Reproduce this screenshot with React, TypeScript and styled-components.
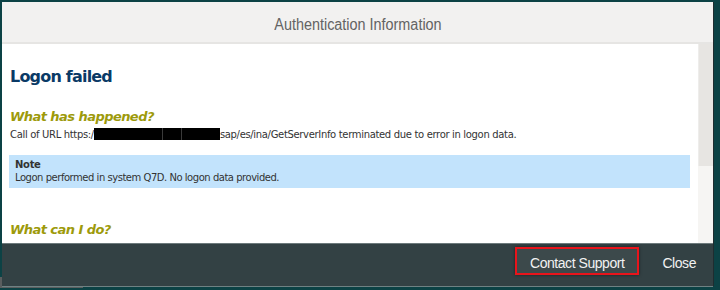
import React from "react";
import styled, { createGlobalStyle } from "styled-components";

const Global = createGlobalStyle`
  html, body { margin: 0; padding: 0; }
  body {
    background: #0c4245;
    width: 720px;
    height: 290px;
    overflow: hidden;
    font-family: "DejaVu Sans", Verdana, sans-serif;
  }
`;

const Backdrop = styled.div`
  position: relative;
  width: 720px;
  height: 290px;
  padding: 2px 0 0 2px;
  box-sizing: border-box;
`;

const BackScrollbar = styled.div`
  position: absolute;
  left: 0;
  top: 277px;
  width: 83px;
  height: 11px;
  background: #5a5e5f;
`;

const Dialog = styled.div`
  position: relative;
  z-index: 1;
  width: 711px;
  height: 284px;
  display: flex;
  flex-direction: column;
  background: #ffffff;
  box-shadow: 1px 0 0 #1f2d30, 0 1px 0 #6f8183;
`;

const Header = styled.div`
  height: 42px;
  flex: none;
  display: flex;
  align-items: center;
  justify-content: center;
  padding-top: 6px;
  box-sizing: border-box;
  background: #f2f1f0;
  border-bottom: 2px solid #e6e5e3;
`;

const Title = styled.h1`
  display: inline-block;
  margin: 0;
  font-family: "Liberation Sans", Arial, sans-serif;
  font-weight: normal;
  font-size: 16px;
  color: #636363;
  transform: scaleX(0.9);
  white-space: nowrap;
`;

const Body = styled.div`
  flex: 1;
  display: flex;
  min-height: 0;
  overflow: hidden;
`;

const Content = styled.div`
  flex: 1;
  padding: 22px 8px 0 7px;
  overflow: hidden;
`;

const Scrollbar = styled.div`
  width: 15px;
  flex: none;
  display: flex;
  flex-direction: column;
  background: #f6f5f3;
`;

const Thumb = styled.div`
  height: 122px;
  background: #e7e5e2;
  border-left: 1px solid #eeedeb;
`;

const MainTitle = styled.h2`
  margin: 0 0 0 1px;
  font-family: "DejaVu Sans", Verdana, sans-serif;
  font-size: 16px;
  font-weight: bold;
  color: #0a3a66;
  letter-spacing: -0.8px;
  line-height: 22px;
`;

const Section = styled.h3<{ $top: number }>`
  margin: ${(p) => p.$top}px 0 0 1px;
  font-family: "DejaVu Sans", Verdana, sans-serif;
  font-size: 13px;
  font-weight: bold;
  font-style: italic;
  color: #9d9a0b;
  letter-spacing: -0.55px;
  line-height: 16px;
`;

const Text = styled.p`
  margin: 3px 0 0 1px;
  font-family: "DejaVu Sans", Tahoma, sans-serif;
  font-size: 10px;
  color: #333333;
  letter-spacing: -0.33px;
  line-height: 14px;
  white-space: nowrap;
`;

const Redacted = styled.span`
  display: inline-block;
  width: 126px;
  height: 12px;
  vertical-align: -2px;
  letter-spacing: 0;
  background: linear-gradient(90deg, #000 0 54%, #3a3a3a 54% 55%, #000 55% 69%, #3a3a3a 69% 70%, #000 70%);
`;

const Note = styled.div`
  margin: 13px 0 0 0;
  padding: 3px 6px 4px 6px;
  background: #c2e3fc;
  height: 26px;
`;

const NoteTitle = styled.div`
  font-family: "DejaVu Sans", Tahoma, sans-serif;
  font-size: 10px;
  font-weight: bold;
  color: #333333;
  letter-spacing: -0.3px;
  line-height: 13px;
`;

const NoteText = styled.div`
  font-family: "DejaVu Sans", Tahoma, sans-serif;
  font-size: 10px;
  color: #333333;
  letter-spacing: -0.47px;
  line-height: 13px;
`;

const Footer = styled.div`
  height: 43px;
  flex: none;
  box-sizing: border-box;
  display: flex;
  align-items: flex-start;
  justify-content: flex-end;
  gap: 12px;
  padding: 3px 6px 0 0;
  background: #334144;
  border-top: 1px solid #6d7a7c;
`;

const FooterButton = styled.button<{ $highlight?: boolean }>`
  font-family: "Liberation Sans", Arial, sans-serif;
  font-size: 14px;
  color: #f2f2f2;
  background: ${(p) => (p.$highlight ? "#3c494b" : "transparent")};
  border: 2px solid ${(p) => (p.$highlight ? "#e8141b" : "transparent")};
  box-shadow: ${(p) => (p.$highlight ? "0 0 3px rgba(0,0,0,0.5)" : "none")};
  height: 28px;
  padding: 4px ${(p) => (p.$highlight ? "13px" : "9px")} 0;
  letter-spacing: -0.45px;
  cursor: pointer;
`;

export default function App() {
  return (
    <>
      <Global />
      <Backdrop>
        <BackScrollbar />
        <Dialog>
          <Header>
            <Title>Authentication Information</Title>
          </Header>
          <Body>
            <Content>
              <MainTitle>Logon failed</MainTitle>
              <Section $top={21}>What has happened?</Section>
              <Text>
                Call of URL https:/<Redacted />sap/es/ina/GetServerInfo terminated due to error in logon data.
              </Text>
              <Note>
                <NoteTitle>Note</NoteTitle>
                <NoteText>Logon performed in system Q7D. No logon data provided.</NoteText>
              </Note>
              <Section $top={34}>What can I do?</Section>
            </Content>
            <Scrollbar>
              <Thumb />
            </Scrollbar>
          </Body>
          <Footer>
            <FooterButton $highlight>Contact Support</FooterButton>
            <FooterButton>Close</FooterButton>
          </Footer>
        </Dialog>
      </Backdrop>
    </>
  );
}
